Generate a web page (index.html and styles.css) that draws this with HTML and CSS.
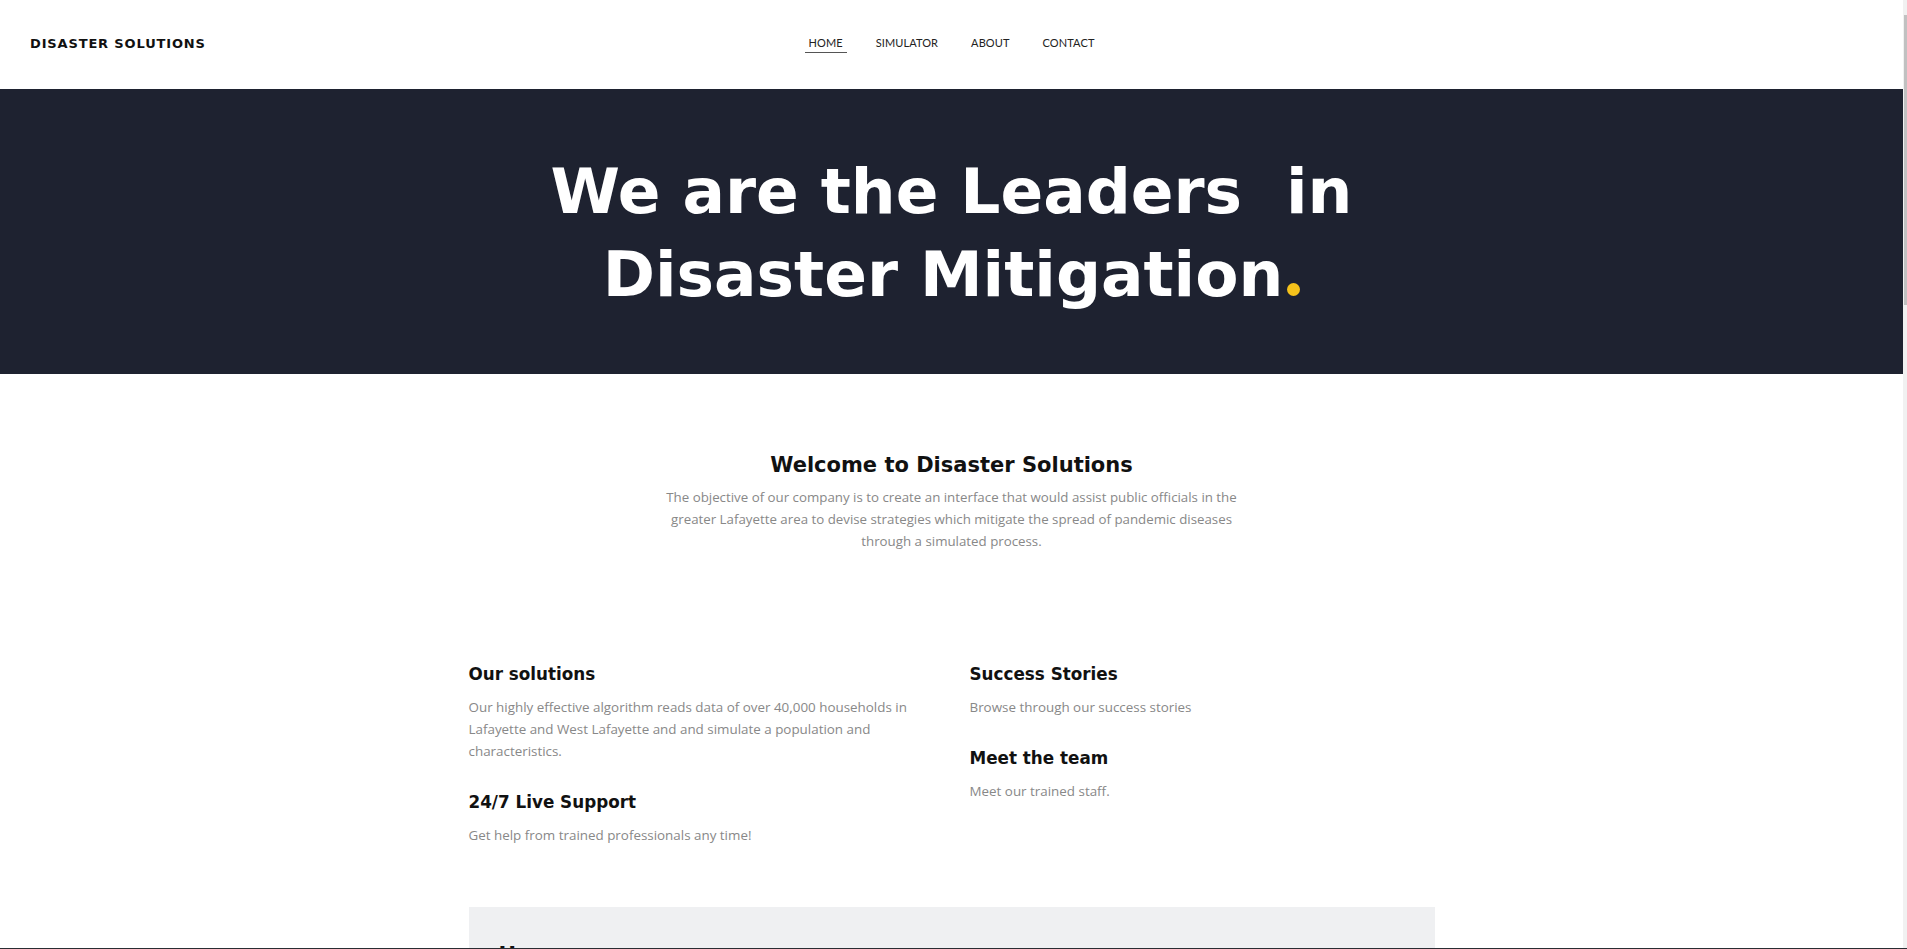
FILE: index.html
```html
<!DOCTYPE html>
<html lang="en">
<head>
<meta charset="utf-8">
<title>Disaster Solutions</title>
<link rel="stylesheet" href="styles.css">
</head>
<body>
<div class="page">
  <header class="header">
    <div class="logo">DISASTER SOLUTIONS</div>
    <nav class="nav">
      <a class="nav-item active" href="#">HOME</a>
      <a class="nav-item" href="#">SIMULATOR</a>
      <a class="nav-item" href="#">ABOUT</a>
      <a class="nav-item" href="#">CONTACT</a>
    </nav>
    <div class="header-spacer"></div>
  </header>

  <section class="hero">
    <h1 class="hero-title">We are the Leaders&nbsp; in<br>Disaster Mitigation<span class="dot">.</span></h1>
  </section>

  <section class="welcome">
    <h2 class="welcome-title">Welcome to Disaster Solutions</h2>
    <p class="welcome-text">The objective of our company is to create an interface that would assist public officials in the greater Lafayette area to devise strategies which mitigate the spread of pandemic diseases through a simulated process.</p>
  </section>

  <section class="features">
    <div class="feature-col">
      <div class="feature">
        <h3 class="feature-title">Our solutions</h3>
        <p class="feature-text">Our highly effective algorithm reads data of over 40,000 households in Lafayette and West Lafayette and and simulate a population and characteristics.</p>
      </div>
      <div class="feature">
        <h3 class="feature-title">24/7 Live Support</h3>
        <p class="feature-text">Get help from trained professionals any time!</p>
      </div>
    </div>
    <div class="feature-col">
      <div class="feature">
        <h3 class="feature-title">Success Stories</h3>
        <p class="feature-text">Browse through our success stories</p>
      </div>
      <div class="feature">
        <h3 class="feature-title">Meet the team</h3>
        <p class="feature-text">Meet our trained staff.</p>
      </div>
    </div>
  </section>

  <section class="panel">
    <h2 class="panel-title">How we serve</h2>
  </section>
</div>
<div class="scrollbar"><div class="scrollbar-thumb"></div></div>
<div class="window-edge"></div>
</body>
</html>
```
FILE: styles.css
```css
* { box-sizing: border-box; }

html, body {
  margin: 0;
  height: 100%;
  overflow: hidden;
}

body {
  background: #ffffff;
  color: #111111;
  font-family: "Open Sans", "Liberation Sans", sans-serif;
}

.page {
  margin-right: 4px;
}

/* Header */
.header {
  height: 89px;
  display: grid;
  grid-template-columns: 1fr auto 1fr;
  align-items: center;
  padding: 0 30px 2px;
}

.logo {
  font-family: "DejaVu Sans", sans-serif;
  font-weight: 700;
  font-size: 13px;
  letter-spacing: 0.85px;
  color: #111;
}

.nav {
  display: flex;
  gap: 25px;
}

.nav-item {
  font-family: "Lato", sans-serif;
  font-size: 11px;
  line-height: 12px;
  letter-spacing: 0.1px;
  color: #222;
  text-decoration: none;
  padding: 2px 4px 3px;
  border-bottom: 1px solid transparent;
}

.nav-item.active {
  border-bottom-color: #555;
}

/* Hero */
.hero {
  background: #1e2230;
  padding: 61px 20px 58px;
  text-align: center;
}

.hero-title {
  margin: 0;
  font-family: "DejaVu Sans", sans-serif;
  font-weight: 700;
  font-size: 63px;
  line-height: 83px;
  color: #ffffff;
}

.dot {
  display: inline-block;
  width: 13px;
  height: 13px;
  margin-left: 4px;
  border-radius: 50%;
  background: #f5c21b;
  color: transparent;
  font-size: 12px;
  line-height: 13px;
  overflow: hidden;
  vertical-align: baseline;
}

/* Welcome */
.welcome {
  padding-top: 79px;
  text-align: center;
}

.welcome-title {
  margin: 0 0 8px;
  font-family: "DejaVu Sans", sans-serif;
  font-weight: 700;
  font-size: 21px;
  line-height: 25px;
  color: #111;
}

.welcome-text {
  margin: 0 auto;
  max-width: 600px;
  font-size: 13.3px;
  line-height: 22px;
  color: #888;
}

/* Features */
.features {
  width: 966px;
  margin: 112px auto 0;
  display: grid;
  grid-template-columns: 1fr 1fr;
  column-gap: 36px;
}

.feature + .feature {
  margin-top: 30px;
}

.feature-title {
  margin: 0 0 12px;
  font-family: "DejaVu Sans", sans-serif;
  font-weight: 700;
  font-size: 16.8px;
  line-height: 20px;
  color: #111;
}

.feature-text {
  margin: 0;
  font-size: 13.4px;
  line-height: 22px;
  color: #888;
}

/* Panel */
.panel {
  width: 966px;
  margin: 61px auto 0;
  background: #eff0f2;
  padding: 36px 30px 40px;
  min-height: 200px;
}

.panel-title {
  margin: 0;
  font-family: "DejaVu Sans", sans-serif;
  font-weight: 700;
  font-size: 21px;
  color: #111;
}

/* Overlay scrollbar + window edge */
.scrollbar {
  position: fixed;
  top: 0;
  right: 0;
  width: 4px;
  height: 100%;
  background: #f1f1f1;
}

.scrollbar-thumb {
  margin-top: 15px;
  width: 3px;
  margin-left: 1px;
  height: 290px;
  background: #c1c1c1;
}

.window-edge {
  position: fixed;
  left: 0;
  right: 0;
  bottom: 0;
  height: 1px;
  background: #2a2d33;
}
```
